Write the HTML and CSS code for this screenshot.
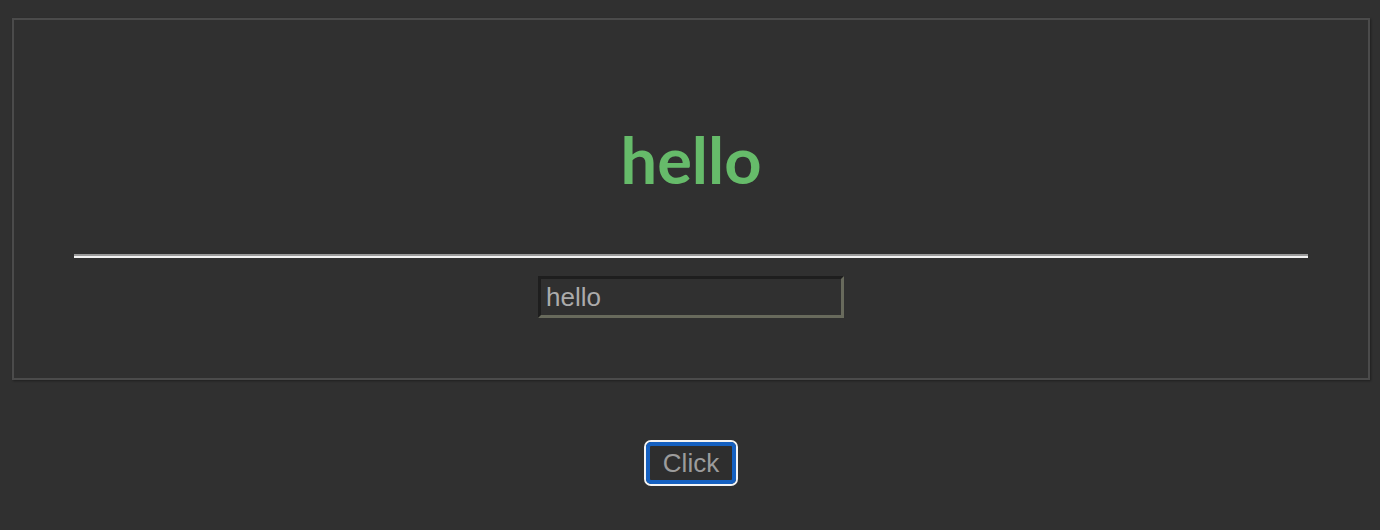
FILE: index.html
```html
<!DOCTYPE html>
<html lang="en">
<head>
<meta charset="utf-8">
<title>hello</title>
<link rel="stylesheet" href="styles.css">
</head>
<body>
  <main class="page">
    <section class="panel">
      <h1 class="title">hello</h1>
      <hr class="divider">
      <div class="field-row">
        <input class="field" type="text" value="hello">
      </div>
    </section>
    <div class="actions">
      <span class="btn-ring"><button class="btn" type="button">Click</button></span>
    </div>
  </main>
</body>
</html>
```
FILE: styles.css
```css
html, body {
  margin: 0;
  padding: 0;
  background: #303030;
}

body {
  font-family: "Liberation Sans", Arial, sans-serif;
}

.page {
  padding: 18px 10px 0 12px;
}

.panel {
  border: 2px solid #4b4b4b;
  padding: 107px 0 60px;
  box-shadow: 1px 1px 2px rgba(0, 0, 0, 0.35);
}

.title {
  margin: 0;
  font-family: "Lato", sans-serif;
  font-weight: 700;
  font-size: 65px;
  line-height: 1;
  text-align: center;
  color: #66bb6a;
}

.divider {
  margin: 62px 60px 18px;
  height: 0;
  border: 0;
  border-top: 2px solid #9a9a9a;
  border-bottom: 2px solid #f2f2f2;
}

.field-row {
  display: flex;
  justify-content: center;
}

.field {
  box-sizing: border-box;
  width: 306px;
  height: 42px;
  margin: 0;
  padding: 0 5px;
  background: #303030;
  color: #ababab;
  font-family: "Liberation Sans", Arial, sans-serif;
  font-size: 26px;
  border-style: solid;
  border-width: 3px;
  border-color: #1e1e1e #686a5c #686a5c #1e1e1e;
  outline: none;
}

.actions {
  display: flex;
  justify-content: center;
  padding-top: 60px;
}

.btn-ring {
  display: flex;
  border: 2px solid #f4f4f4;
  border-radius: 7px;
}

.btn {
  box-sizing: border-box;
  width: 90px;
  height: 42px;
  margin: 0;
  padding: 0;
  border: 4px solid #1560c0;
  border-radius: 5px;
  background: #2e2e2e;
  color: #9c9c9c;
  font-family: "Liberation Sans", Arial, sans-serif;
  font-size: 26px;
  line-height: 34px;
  text-align: center;
}
```
